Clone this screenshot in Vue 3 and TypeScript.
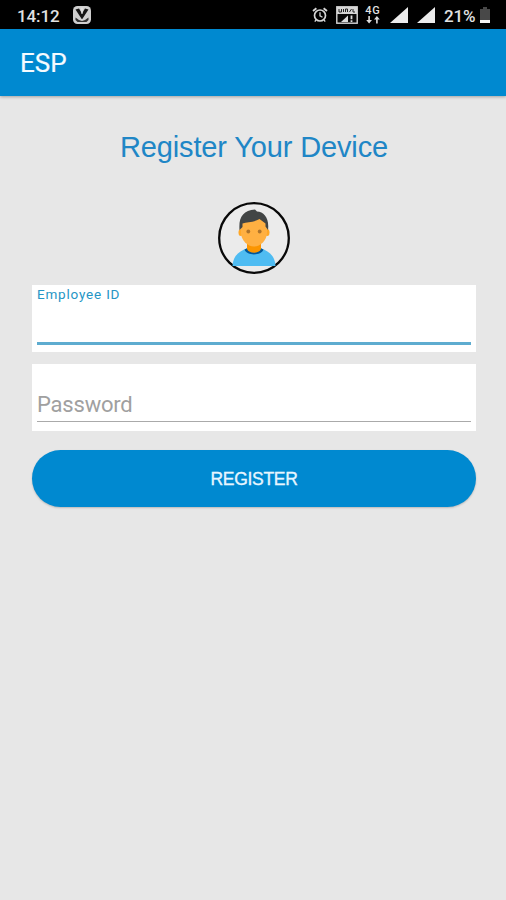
<script setup lang="ts">
import { ref } from 'vue'

const employeeId = ref('')
const password = ref('')
</script>

<template>
  <div class="screen">
    <header class="status">
      <div class="status-left">
        <span class="clock">14:12</span>
        <svg class="app-badge" width="18" height="18" viewBox="0 0 18 18">
          <rect x="0" y="0" width="18" height="18" rx="4.5" fill="#cfcfcf" />
          <path d="M2.5 3.5 6 2.500 9 7.500 12 2.500 15.500 3.500 9.300 13H8.700Z" fill="#151515" />
          <path d="M7.600 1.500h2.800L9.500 8h-1Z" fill="#dedede" />
          <path d="M2.500 11.500 6 14 9 15 12 14 15.500 11.500V14L13.500 16H4.500L2.500 14Z" fill="#333" />
        </svg>
      </div>
      <div class="status-right">
        <svg class="alarm" width="16" height="17" viewBox="0 0 16 17" fill="none" stroke="#d6d6d6">
          <circle cx="8" cy="8.5" r="5.5" stroke-width="1.7" />
          <path d="M1 4 4.4 1.2 M15 4 11.6 1.2" stroke-width="1.8" />
          <path d="M8 5.300v3.500l2.500 1.400" stroke-width="1.3" />
          <path d="M4 12.900 2.8 14.700 M12 12.900l1.2 1.8" stroke-width="1.3" />
        </svg>
        <svg class="sim" width="22" height="18" viewBox="0 0 22 18">
          <rect x="0.8" y="0.8" width="20.4" height="16.4" fill="#090909" stroke="#d6d6d6" stroke-width="1.4" />
          <path d="M1 1h20v7H1z" fill="#d6d6d6" />
          <path d="M3 3v3h2.5V3 M7.5 3v3 M9.5 6V3h2v3 M13.5 6l2-3 M17 3v3h2" fill="none" stroke="#222" stroke-width="1" />
          <path d="M5 16 12 9.5V16Z" fill="#ddd" />
          <path d="M15.5 9.5v3.7 M15.5 14.2v1.8" stroke="#ddd" stroke-width="1.8" />
        </svg>
        <div class="network">
          <span>4G</span>
          <svg width="14" height="8" viewBox="0 0 14 8" fill="#ddd">
            <path d="M2.3 0h1.6v4H6L3.1 7.5 0.2 4h2.1z M10.1 7.5h1.6v-4h2.1L10.9 0 8 3.5h2.1z" />
          </svg>
        </div>
        <svg class="signal" width="18" height="16" viewBox="0 0 18 16"><path d="M0 16 18 0V16Z" fill="#ececec" /></svg>
        <svg class="signal second" width="18" height="16" viewBox="0 0 18 16"><path d="M0 16 18 0V16Z" fill="#ececec" /></svg>
        <span class="percent">21%</span>
        <svg class="battery" width="10" height="16" viewBox="0 0 10 16">
          <path d="M3 0h4v2h3v11H0V2h3z" fill="#484848" />
          <path d="M0 13h10v3H0z" fill="#f4f4f4" />
        </svg>
      </div>
    </header>

    <div class="app-bar"><span>ESP</span></div>

    <main class="content">
      <h1>Register Your Device</h1>

      <svg class="avatar" width="72" height="72" viewBox="0 0 72 72">
        <circle cx="36" cy="36" r="34.8" fill="#ebebeb" stroke="#080808" stroke-width="2.3" />
        <path d="M14.5 64C15 54 21 49 29 46.5H43C51 49 57 54 57.5 64Z" fill="#4fbcf2" />
        <path d="M26.5 47.5 29.5 46H42.5L45.5 47.5C43 54 29 54 26.5 47.5Z" fill="#01579b" />
        <path d="M29 41H43V47C41 52 31 52 29 47Z" fill="#fb9500" />
        <ellipse cx="22.8" cy="30.5" rx="2.3" ry="3.5" fill="#ffa726" />
        <ellipse cx="49.2" cy="30.5" rx="2.3" ry="3.5" fill="#ffa726" />
        <path d="M23 20C23 13 49 13 49 20V31C49 38 42.5 44.5 36 44.5S23 38 23 31Z" fill="#ffb042" />
        <path d="M21.5 28C20.5 15 25 8.5 37 7.5L39 9.5C46 9.8 51.5 16 50 28L47.5 24.5V21.5L41.5 17C36 20.5 29 19.5 24.5 21.5V25Z" fill="#424545" />
        <circle cx="30.3" cy="29.5" r="1.9" fill="#ad732c" />
        <circle cx="41.7" cy="29.5" r="1.9" fill="#ad732c" />
      </svg>

      <form @submit.prevent>
        <div class="field active">
          <label for="employee">Employee ID</label>
          <input id="employee" v-model="employeeId" type="text" />
        </div>
        <div class="field">
          <input v-model="password" type="password" placeholder="Password" />
        </div>
        <button type="submit">REGISTER</button>
      </form>
    </main>
  </div>
</template>

<style>
body {
  margin: 0;
  background: #e7e7e7;
}
</style>

<style scoped>
.screen {
  height: 900px;
  overflow: hidden;
  background: #e7e7e7;
  font-family: Roboto, sans-serif;
}
.status {
  box-sizing: border-box;
  height: 29px;
  padding: 0 16px 0 17px;
  background: #000;
  color: #e2e2e2;
  display: flex;
  justify-content: space-between;
}
.status-left,
.status-right {
  display: flex;
  align-items: flex-start;
}
.clock,
.percent {
  font-size: 17px;
  line-height: 20px;
  font-weight: 500;
  margin-top: 6px;
  letter-spacing: -0.1px;
}
.clock {
  width: 42px;
}
.app-badge {
  margin: 6px 0 0 14px;
}
.alarm {
  margin-top: 7px;
}
.sim {
  margin: 6px 0 0 8px;
}
.network {
  width: 16px;
  margin: 6px 0 0 7px;
  display: flex;
  flex-direction: column;
  align-items: center;
}
.network span {
  font-size: 11px;
  line-height: 10px;
  font-weight: 500;
  letter-spacing: 0.8px;
}
.signal {
  margin: 7px 0 0 9px;
}
.second {
  margin-left: 9px;
}
.percent {
  width: 32px;
  margin-left: 9px;
}
.battery {
  margin: 7px 0 0 4px;
}
.app-bar {
  position: relative;
  height: 67px;
  box-sizing: border-box;
  padding-left: 20px;
  display: flex;
  align-items: center;
  background: #0089d0;
  box-shadow: 0 1px 3px rgba(0, 0, 0, 0.3);
  color: #f5fbff;
  font-size: 26px;
  font-weight: 400;
  -webkit-text-stroke: 0.2px #f5fbff;
}
.content {
  padding: 32px 30px 0 32px;
  display: flex;
  flex-direction: column;
  align-items: center;
}
h1 {
  margin: 0;
  font: 400 29px/38px "Liberation Sans", Arial, sans-serif;
  letter-spacing: -0.14px;
  color: #2086c6;
  white-space: nowrap;
}
.avatar {
  margin-top: 36px;
}
form {
  width: 444px;
  margin-top: 11px;
}
.field {
  box-sizing: border-box;
  height: 67px;
  padding: 0 5px 9px;
  margin-bottom: 12px;
  background: #fff;
  display: flex;
  flex-direction: column;
}
.field.active {
  padding-bottom: 7px;
}
label {
  height: 18px;
  font: 400 13.5px/18px Roboto, sans-serif;
  letter-spacing: 0.8px;
  color: #2595c5;
}
input {
  box-sizing: border-box;
  width: 100%;
  min-height: 0;
  flex: 1;
  padding: 24px 0 0;
  border: 0;
  border-bottom: 1.5px solid #aaa;
  border-radius: 0;
  background: transparent;
  outline: none;
  font: 400 22px/26px Roboto, sans-serif;
}
.active input {
  padding-top: 0;
  border-bottom: 3px solid #5eacd0;
}
input::placeholder {
  color: #a0a0a0;
  opacity: 1;
  letter-spacing: -0.2px;
}
button {
  display: block;
  width: 444px;
  height: 57px;
  margin: 19px 0 0;
  padding: 1px 0 0;
  border: 0;
  border-radius: 28.5px;
  background: #0089d0;
  color: #e7f6ff;
  font: 400 17.5px/56px "Liberation Sans", Arial, sans-serif;
  letter-spacing: -0.3px;
  -webkit-text-stroke: 0.35px #e7f6ff;
  box-shadow: 0 1px 2px rgba(0, 0, 0, 0.2);
}
</style>
